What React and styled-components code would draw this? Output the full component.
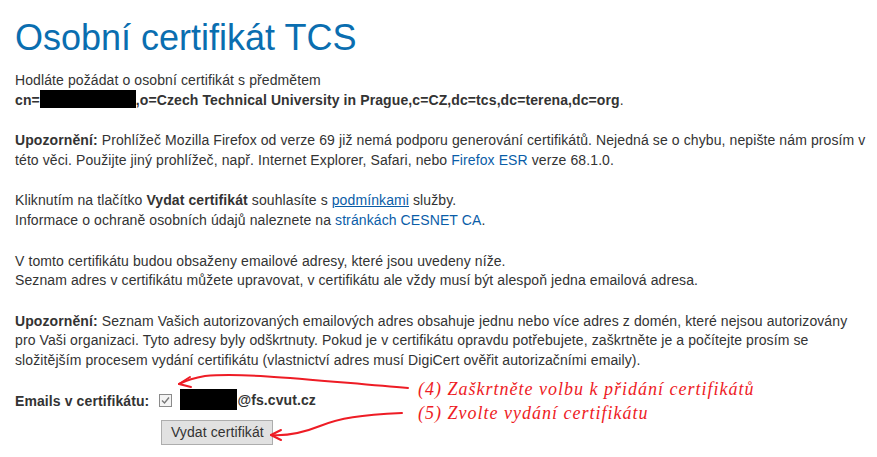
import React from "react";
import styled, { createGlobalStyle } from "styled-components";

const Global = createGlobalStyle`
  html, body { margin: 0; padding: 0; background: #fff; }
  body { font-family: "Liberation Sans", Arial, sans-serif; font-size: 14px; color: #333; letter-spacing: 0.1px; }
`;

const Page = styled.div`
  position: relative;
  width: 877px;
  height: 457px;
  box-sizing: border-box;
  padding: 18px 10px 0 15px;
  overflow: hidden;
`;

const Title = styled.h1`
  margin: 0 0 13px;
  font-size: 36px;
  line-height: 40px;
  font-weight: normal;
  letter-spacing: 0;
  color: #0a6eb0;
`;

const Para = styled.p`
  margin: 0 0 21px;
  line-height: 19.6px;
`;

const Redact = styled.span`
  display: inline-block;
  vertical-align: middle;
  width: ${(p) => p.w}px;
  height: ${(p) => p.h}px;
  background: #000;
  margin-top: -3px;
`;

const Link = styled.a`
  color: #0a5da8;
  text-decoration: ${(p) => (p.underline ? "underline" : "none")};
`;

const Form = styled.div`
  display: grid;
  grid-template-columns: auto auto;
  justify-content: start;
  column-gap: 10px;
  row-gap: 10px;
  align-items: center;
  margin-top: 18px;
`;

const Label = styled.span`
  font-weight: bold;
`;

const EmailCell = styled.span`
  display: flex;
  align-items: center;
  gap: 8px;
  font-weight: bold;
`;

const Check = styled.span`
  display: inline-flex;
  width: 13px;
  height: 13px;
  box-sizing: border-box;
  border: 1px solid #8a8a8a;
  background: #f4f4f4;
  align-items: center;
  justify-content: center;
`;

const Button = styled.button`
  justify-self: start;
  margin-left: 2px;
  width: 112px;
  height: 25px;
  font-family: "Liberation Sans", Arial, sans-serif;
  font-size: 14px;
  letter-spacing: 0.1px;
  color: #333;
  background: #e1e1e1;
  border: 1px solid #adadad;
  padding: 0;
`;

const Note = styled.div`
  position: absolute;
  left: ${(p) => p.x}px;
  top: ${(p) => p.y}px;
  font-family: "Liberation Serif", serif;
  font-style: italic;
  font-size: 18px;
  letter-spacing: 1px;
  color: #ee1c25;
  white-space: nowrap;
`;

const Arrows = styled.svg`
  position: absolute;
  left: 0;
  top: 0;
  pointer-events: none;
`;

export default function App() {
  return (
    <>
      <Global />
      <Page>
        <Title>Osobní certifikát TCS</Title>
        <Para>
          Hodláte požádat o osobní certifikát s předmětem
          <br />
          <b>
            cn=<Redact w={96} h={18} />,o=Czech Technical University in Prague,c=CZ,dc=tcs,dc=terena,dc=org
          </b>
          .
        </Para>
        <Para>
          <b>Upozornění:</b> Prohlížeč Mozilla Firefox od verze 69 již nemá podporu generování certifikátů. Nejedná se o chybu, nepište nám prosím v této věci. Použijte jiný prohlížeč, např. Internet Explorer, Safari, nebo{" "}
          <Link href="#">Firefox ESR</Link> verze 68.1.0.
        </Para>
        <Para>
          Kliknutím na tlačítko <b>Vydat certifikát</b> souhlasíte s{" "}
          <Link href="#" underline>podmínkami</Link> služby.
          <br />
          Informace o ochraně osobních údajů naleznete na <Link href="#">stránkách CESNET CA</Link>.
        </Para>
        <Para>
          V tomto certifikátu budou obsaženy emailové adresy, které jsou uvedeny níže.
          <br />
          Seznam adres v certifikátu můžete upravovat, v certifikátu ale vždy musí být alespoň jedna emailová adresa.
        </Para>
        <Para>
          <b>Upozornění:</b> Seznam Vašich autorizovaných emailových adres obsahuje jednu nebo více adres z domén, které nejsou autorizovány pro Vaši organizaci. Tyto adresy byly odškrtnuty. Pokud je v certifikátu opravdu potřebujete, zaškrtněte je a počítejte prosím se složitějším procesem vydání certifikátu (vlastnictví adres musí DigiCert ověřit autorizačními emaily).
        </Para>
        <Form>
          <Label>Emails v certifikátu:</Label>
          <EmailCell>
            <Check>
              <svg width="9" height="9" viewBox="0 0 9 9">
                <path d="M1 4.5 L3.5 7 L8 1.5" fill="none" stroke="#777" strokeWidth="1.4" />
              </svg>
            </Check>
            <span>
              <Redact w={57} h={21} />@fs.cvut.cz
            </span>
          </EmailCell>
          <span />
          <Button>Vydat certifikát</Button>
        </Form>

        <Arrows width="877" height="457" viewBox="0 0 877 457">
          <path d="M408 388 C 330 382, 250 372, 205 376 C 193 378, 185 381, 179 384" fill="none" stroke="#ee1c25" strokeWidth="2" strokeLinecap="round" />
          <path d="M179 384 L 190 377 M179 384 L 191 387" fill="none" stroke="#ee1c25" strokeWidth="2" strokeLinecap="round" />
          <path d="M402 413 C 360 415, 340 418, 320 426 C 300 434, 285 436, 271 435" fill="none" stroke="#ee1c25" strokeWidth="2" strokeLinecap="round" />
          <path d="M271 435 L 281 430 M271 435 L 281 440" fill="none" stroke="#ee1c25" strokeWidth="2" strokeLinecap="round" />
        </Arrows>
        <Note x={418} y={379}>(4) Zaškrtněte volbu k přidání certifikátů</Note>
        <Note x={418} y={403}>(5) Zvolte vydání certifikátu</Note>
      </Page>
    </>
  );
}
